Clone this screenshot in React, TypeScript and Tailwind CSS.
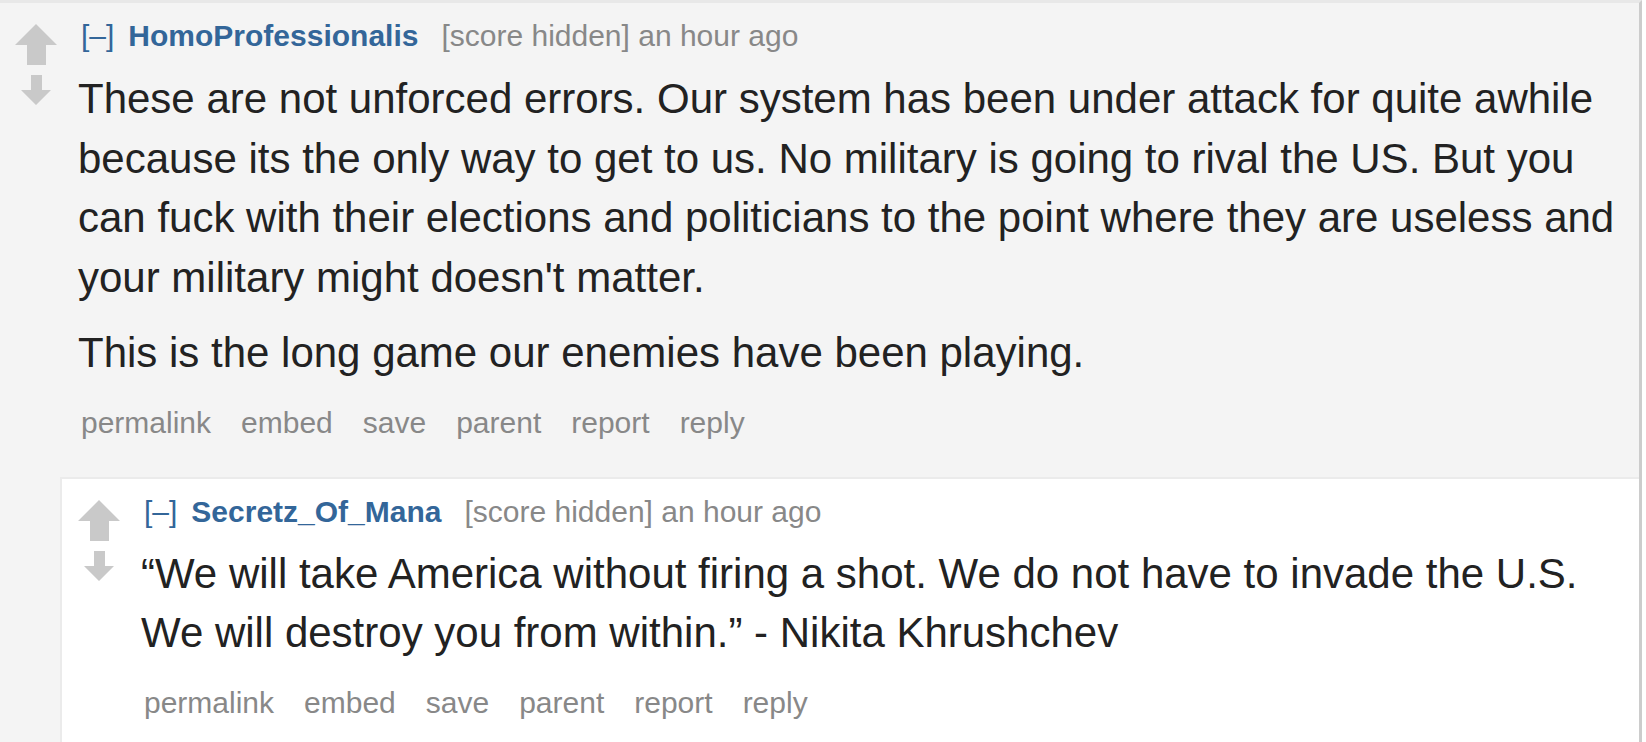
import * as React from 'react'

const font = { fontFamily: '"Liberation Sans", Arial, sans-serif' }

function UpArrow() {
  return (
    <svg width="42" height="41" viewBox="0 0 42 41" className="block">
      <path d="M21 0 L42 21 L31 21 L31 41 L12 41 L12 21 L0 21 Z" fill="#c9c9c9" />
    </svg>
  )
}

function DownArrow() {
  return (
    <svg width="30" height="30" viewBox="0 0 30 30" className="block">
      <path d="M10 0 L21 0 L21 15 L30 15 L15 30 L0 15 L10 15 Z" fill="#c9c9c9" />
    </svg>
  )
}

function Votes() {
  return (
    <div className="flex w-[42px] shrink-0 flex-col items-center pt-[21px]">
      <UpArrow />
      <div className="mt-[10px]">
        <DownArrow />
      </div>
    </div>
  )
}

function Tagline({ author }: { author: string }) {
  return (
    <div className="pl-[3px] text-[30px] leading-[36px] whitespace-nowrap">
      <span className="text-[#369]">[–]</span>
      <span className="ml-[14px] font-bold text-[#369]">{author}</span>
      <span className="ml-[23px] text-[#888]">[score hidden] an hour ago</span>
    </div>
  )
}

function Buttons() {
  return (
    <ul className="flex gap-[30px] pl-[3px] text-[30px] leading-[36px] text-[#888]">
      {['permalink', 'embed', 'save', 'parent', 'report', 'reply'].map((b) => (
        <li key={b}>{b}</li>
      ))}
    </ul>
  )
}

export default function App() {
  return (
    <div className="min-h-screen bg-white" style={font}>
      <div className="mr-[4px] border-t-[3px] border-r-[3px] border-t-[#e8e8e8] border-r-[#ccc] bg-[#f4f4f4]">
        <div className="flex pl-[15px]">
          <Votes />
          <div className="ml-[21px] flex-1 pr-[14px] pt-[15px]">
            <Tagline author="HomoProfessionalis" />
            <div className="mt-[15px] text-[42px] leading-[59.5px] text-[#222]">
              <p>
                These are not unforced errors. Our system has been under attack for quite awhile because its
                the only way to get to us. No military is going to rival the US. But you can fuck with their
                elections and politicians to the point where they are useless and your military might doesn't
                matter.
              </p>
              <p className="mt-[16px]">This is the long game our enemies have been playing.</p>
            </div>
            <div className="mt-[22px]">
              <Buttons />
            </div>
          </div>
        </div>

        <div className="ml-[60px] mt-[36px] border-t-2 border-l-2 border-[#ebebeb] bg-white">
          <div className="flex pl-[16px]">
            <Votes />
            <div className="ml-[21px] flex-1 pr-[14px] pt-[15px]">
              <Tagline author="Secretz_Of_Mana" />
              <div className="mt-[14px] text-[42px] leading-[59.5px] text-[#222]">
                <p>
                  “We will take America without firing a shot. We do not have to invade the U.S. We will destroy
                  you from within.” - Nikita Khrushchev
                </p>
              </div>
              <div className="mt-[22px] pb-[30px]">
                <Buttons />
              </div>
            </div>
          </div>
        </div>
      </div>
    </div>
  )
}
